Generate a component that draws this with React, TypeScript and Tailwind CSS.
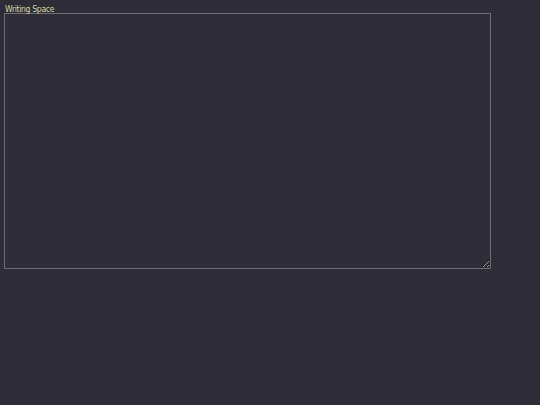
export default function App() {
  return (
    <div className="min-h-[405px] w-full bg-[#2e2c36] px-1 pt-[5px] font-['DejaVu_Sans',sans-serif]">
      <label className="block pl-[1px] font-['DejaVu_Sans_Condensed','DejaVu_Sans',sans-serif] font-stretch-condensed text-[8.5px] leading-[8px] tracking-[-0.3px] text-[#d6d8aa]">
        Writing Space
      </label>
      <textarea className="block h-[256px] w-[487px] border border-[#6e6c76] bg-[#2e2c36] text-[#d6d8aa] outline-none" />
    </div>
  )
}
